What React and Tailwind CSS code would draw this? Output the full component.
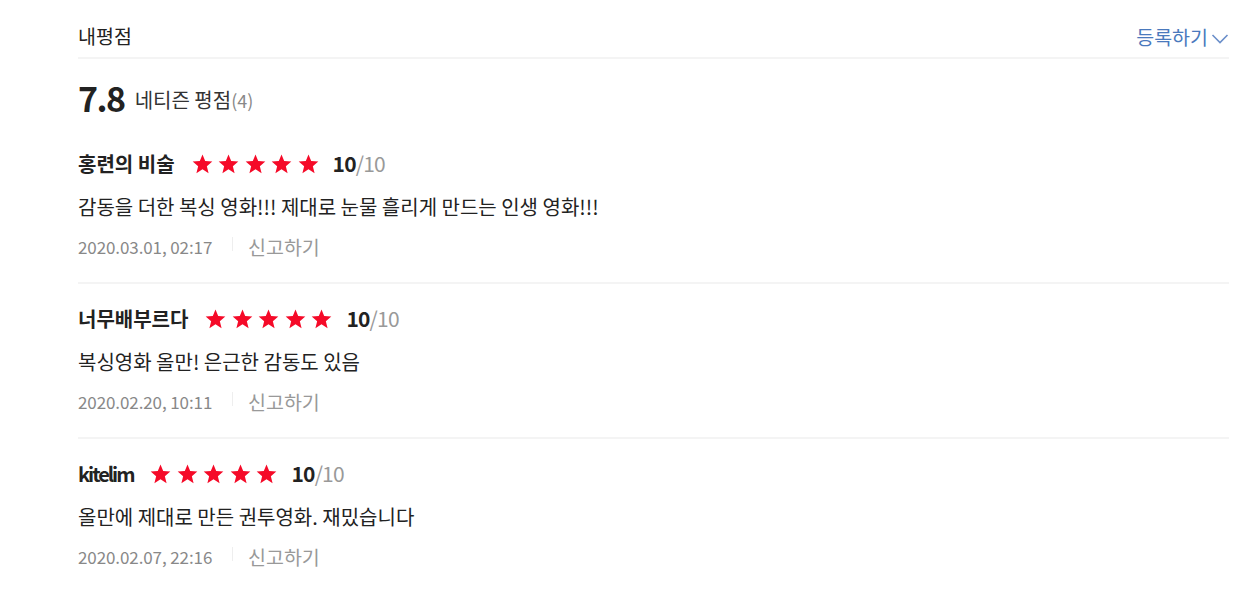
import React from "react";

const font = { fontFamily: '"Noto Sans CJK KR", "Noto Sans", sans-serif' };

function Star() {
  return (
    <svg width="21" height="20" viewBox="0 0 24 23">
      <path d="M12 0.5l3.1 7.6 8.2 0.6-6.3 5.3 2 8-7-4.4-7 4.4 2-8L0.7 8.7l8.2-0.6z" fill="#f50a28" />
    </svg>
  );
}

const reviews = [
  { name: "홍련의 비술", latin: false, text: "감동을 더한 복싱 영화!!! 제대로 눈물 흘리게 만드는 인생 영화!!!", date: "2020.03.01, 02:17" },
  { name: "너무배부르다", latin: false, text: "복싱영화 올만! 은근한 감동도 있음", date: "2020.02.20, 10:11" },
  { name: "kitelim", latin: true, text: "올만에 제대로 만든 권투영화. 재밌습니다", date: "2020.02.07, 22:16" },
];

export default function App() {
  return (
    <div className="w-[1256px] h-[590px] bg-white overflow-hidden" style={font}>
      <div className="ml-[78px] w-[1151px]">
        <div className="flex justify-between h-[59px] pt-[24px] border-b-2 border-[#f4f4f4]">
          <div className="text-[19.5px] text-[#222] leading-[24px]">내평점</div>
          <div className="flex items-center h-[26px] text-[19.5px] text-[#4a79bd] leading-[26px]">
            <span>등록하기</span>
            <svg width="18" height="12" viewBox="0 0 18 12" className="ml-[3px] mt-[3px]">
              <path d="M1.5 2l7.5 7.5L16.5 2" stroke="#6b8fca" strokeWidth="1.6" fill="none" />
            </svg>
          </div>
        </div>
        <div className="flex items-center h-[70px] pt-[8px]">
          <span className="text-[34px] font-bold text-[#222] tracking-[-1.5px] leading-none">7.8</span>
          <span className="ml-[10px] text-[20px] text-[#333] mt-[3px]">네티즌 평점</span>
          <span className="text-[18px] text-[#888] mt-[5px]">(4)</span>
        </div>
        {reviews.map((r, i) => (
          <div key={i} className={`pt-[15px] h-[155px] ${i < 2 ? "border-b-2 border-[#f4f4f4]" : ""}`}>
            <div className="flex items-center h-[40px]">
              <span className={`text-[20px] font-bold text-[#222] ${r.latin ? "tracking-[-2px]" : ""}`}>{r.name}</span>
              <span className="flex gap-[5.5px] ml-[17px]">
                {[0, 1, 2, 3, 4].map((k) => (
                  <Star key={k} />
                ))}
              </span>
              <span className="ml-[14px] text-[21px] tracking-[-0.8px]">
                <span className="font-bold text-[#222]">10</span>
                <span className="text-[#999]">/10</span>
              </span>
            </div>
            <div className="text-[20px] text-[#222] h-[40px] leading-[40px] mt-[3px]">{r.text}</div>
            <div className="flex items-center h-[40px]">
              <span className="text-[17px] text-[#888] tracking-[-0.1px] w-[154px]">{r.date}</span>
              <span className="w-px h-[14px] bg-[#eee] mr-[15px] -mt-[6px]"></span>
              <span className="text-[19.5px] text-[#999]">신고하기</span>
            </div>
          </div>
        ))}
      </div>
    </div>
  );
}
